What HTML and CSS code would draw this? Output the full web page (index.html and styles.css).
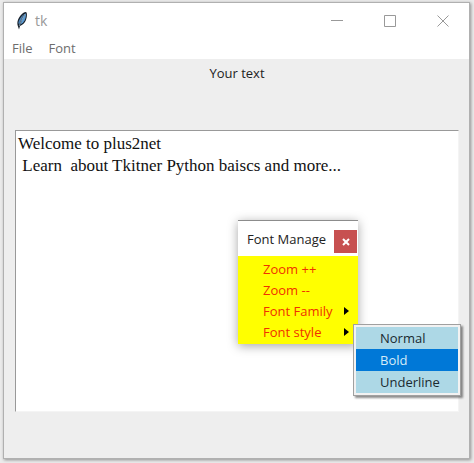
FILE: index.html
```html
<!DOCTYPE html>
<html lang="en">
<head>
    <meta charset="UTF-8">
    <meta name="viewport" content="width=device-width, initial-scale=1.0">
    <title>tk</title>
    <link rel="stylesheet" href="styles.css">
</head>
<body>
    <div class="window">
        <header class="titlebar">
            <svg class="feather" width="12" height="20" viewBox="0 0 12 20" aria-hidden="true">
                <path d="M10 1 C11.500 2 11 6 10 9 C9 12 6.500 14 4 15 L3 18.500 L2 15.500 C0.500 11.500 2 7.500 4.500 4.500 C6 2.500 8 1.200 10 1 Z" fill="#17202b"/>
                <path d="M9.800 2 C10.500 5 9.200 9 7.200 11.500 L4.500 13.500 L6.500 7.500 Z" fill="#5c9ad0"/>
                <path d="M8 3 C5 5.500 2.800 8.500 2.300 12 L3.200 13.500 L5.500 8 Z" fill="#4a80b4"/>
                <path d="M8.800 3 L5.800 8.500 L3.200 15" fill="none" stroke="#b9d4ea" stroke-width="0.600"/>
            </svg>
            <span class="title">tk</span>
            <div class="controls">
                <button type="button" aria-label="Minimize">
                    <svg width="12" height="12" viewBox="0 0 12 12"><path d="M0 5.500H12"/></svg>
                </button>
                <button type="button" aria-label="Maximize">
                    <svg width="12" height="12" viewBox="0 0 12 12"><path d="M0.500 0.500H11.500V11.500H0.500Z"/></svg>
                </button>
                <button type="button" aria-label="Close">
                    <svg width="12" height="12" viewBox="0 0 12 12"><path d="M0.500 0.500L11.500 11.500M11.500 0.500L0.500 11.500"/></svg>
                </button>
            </div>
        </header>

        <nav class="menubar">
            <button type="button">File</button>
            <button type="button">Font</button>
        </nav>

        <main class="content">
            <label for="editor">Your text</label>
            <textarea id="editor" class="editor" spellcheck="false">Welcome to plus2net
 Learn  about Tkitner Python baiscs and more...</textarea>
        </main>

        <!-- Torn off font menu -->
        <div class="tearoff">
            <div class="tearoff-title">
                <span>Font Manage</span>
                <button type="button" class="tearoff-close" aria-label="Close menu">
                    <svg width="8" height="8" viewBox="0 0 8 8"><path d="M1 1L7 7M7 1L1 7"/></svg>
                </button>
            </div>
            <div class="tearoff-items">
                <button type="button">Zoom ++</button>
                <button type="button">Zoom --</button>
                <button type="button" class="has-submenu">Font Family</button>
                <button type="button" class="has-submenu">Font style</button>
            </div>
        </div>

        <div class="submenu">
            <button type="button">Normal</button>
            <button type="button" class="active">Bold</button>
            <button type="button">Underline</button>
        </div>
    </div>
</body>
</html>
```

FILE: styles.css
```css
* {
    box-sizing: border-box;
}

body {
    margin: 0;
    padding: 2px 4px 4px 3px;
    height: 100vh;
    background-color: #ebebeb;
    font-family: "Open Sans", "Noto Sans", sans-serif;
    font-size: 13px;
}

button {
    margin: 0;
    padding: 0;
    border: none;
    background: none;
    color: inherit;
    font: inherit;
}

.window {
    position: relative;
    display: flex;
    flex-direction: column;
    height: 100%;
    background-color: #eeeeee;
    border: 1px solid #b0b0b0;
    box-shadow: 1px 1px 3px rgba(0, 0, 0, 0.4);
}

/* Title bar */
.titlebar {
    display: flex;
    align-items: center;
    height: 35px;
    padding-left: 12px;
    background-color: #ffffff;
    color: #999999;
}

.title {
    margin-left: 7px;
    font-size: 14px;
}

.controls {
    display: flex;
    margin-left: auto;
}

.controls button {
    display: flex;
    align-items: center;
    justify-content: center;
    width: 53px;
    height: 34px;
}

.controls svg {
    fill: none;
    stroke: #999999;
}

/* Menu bar */
.menubar {
    display: flex;
    gap: 16px;
    height: 21px;
    padding-left: 8px;
    background-color: #ffffff;
    color: #6d6d6d;
    line-height: 21px;
}

.content {
    display: flex;
    flex: 1;
    flex-direction: column;
    padding: 4px 10px 46px 11px;
}

.content label {
    align-self: center;
    height: 67px;
    line-height: 20px;
    color: #222222;
}

.editor {
    flex: 1;
    width: 100%;
    margin: 0;
    padding: 2px;
    border: 1px solid #f4f4f4;
    border-top-color: #999999;
    border-left-color: #999999;
    outline: none;
    resize: none;
    background-color: #ffffff;
    color: #111111;
    font-family: "Liberation Serif", serif;
    font-size: 17px;
    line-height: 22px;
}

/* Font menu floating over the editor */
.tearoff {
    position: absolute;
    top: 217px;
    left: 234px;
    width: 120px;
    border-top: 1px solid #8c8c8c;
    background-color: #ffff00;
    box-shadow: 0 2px 10px rgba(0, 0, 0, 0.35);
}

.tearoff-title {
    display: flex;
    align-items: flex-end;
    justify-content: space-between;
    height: 35px;
    padding: 0 1px 3px 9px;
    background-color: #ffffff;
    color: #222222;
    line-height: 28px;
}

.tearoff-close {
    display: flex;
    align-items: center;
    justify-content: center;
    width: 23px;
    height: 23px;
    background-color: #c75050;
}

.tearoff-close svg {
    fill: none;
    stroke: #ffffff;
    stroke-width: 2;
}

.tearoff-items {
    display: flex;
    flex-direction: column;
    padding: 2px 0;
    color: #f03000;
}

.tearoff-items button,
.submenu button {
    display: flex;
    align-items: center;
    height: 21px;
    padding-left: 25px;
    text-align: left;
}

.has-submenu::after {
    content: "";
    margin-left: auto;
    margin-right: 9px;
    border: 4px solid transparent;
    border-left: 5px solid #000000;
    border-right: none;
}

.submenu {
    position: absolute;
    top: 321px;
    left: 349px;
    display: flex;
    flex-direction: column;
    width: 108px;
    padding: 2px;
    border: 1px solid #a0a0a0;
    background-color: #f2f2f2;
    box-shadow: 2px 2px 2px rgba(0, 0, 0, 0.45);
    color: #1a2a30;
}

.submenu button {
    height: 22px;
    padding-left: 24px;
    background-color: #add8e6;
}

.submenu .active {
    background-color: #0078d7;
    color: #d5ecf8;
}
```
